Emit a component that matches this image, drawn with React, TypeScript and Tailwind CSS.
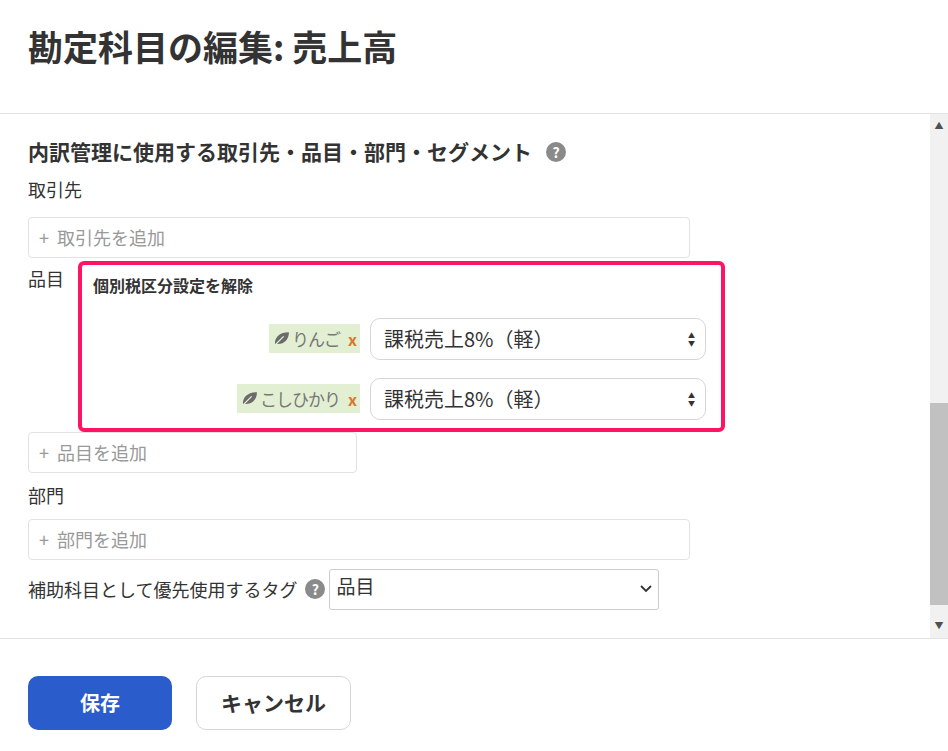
import React from "react";

const font = { fontFamily: '"Noto Sans CJK JP", "Noto Sans", sans-serif' };

function Leaf() {
  return (
    <svg width="17" height="15" viewBox="0 0 16 14" className="inline-block mr-[2px]">
      <path d="M2 13 C1 7 5 1 15 1 C15 8 10 13 3 12 Z" fill="#6b6b6b" />
      <path d="M2 13 L10 5" stroke="#e3efd3" strokeWidth="1.3" fill="none" />
    </svg>
  );
}

function Help() {
  return (
    <span className="inline-flex items-center justify-center w-[20px] h-[20px] rounded-full bg-[#8a8a8a] text-white text-[14px] font-bold leading-none">?</span>
  );
}

function TaxRow({ name }: { name: string }) {
  return (
    <div className="flex items-center justify-end gap-[10px]">
      <span className="flex items-center h-[29px] px-[4px] bg-[#e3efd3] text-[#777] text-[17px] tracking-[-1px]">
        <Leaf />
        {name}
        <span className="ml-[8px] text-[#d8782a] font-bold text-[16px]">x</span>
      </span>
      <div className="w-[336px] h-[42px] border border-[#d6d6d6] rounded-[10px] flex items-center justify-between pl-[13px] pr-[10px] text-[20px] text-[#333]">
        <span>課税売上8%（軽）</span>
        <span className="flex flex-col text-[7px] leading-[8px] text-[#333]">
          <span>▲</span>
          <span>▼</span>
        </span>
      </div>
    </div>
  );
}

function AddInput({ label, w }: { label: string; w: string }) {
  return (
    <div className={`${w} h-[41px] border border-[#e2e2e2] rounded-[4px] flex items-center px-[10px] text-[18px] text-[#999]`}>
      +&nbsp;&nbsp;{label}
    </div>
  );
}

export default function App() {
  return (
    <div className="w-[948px] h-[751px] bg-white flex flex-col overflow-hidden text-[#333]" style={font}>
      <div className="h-[114px] shrink-0 border-b border-[#e2e2e2] flex items-center px-[28px]">
        <h1 className="text-[35px] font-bold text-[#333] -mt-[20px]">勘定科目の編集: 売上高</h1>
      </div>
      <div className="h-[525px] shrink-0 flex border-b border-[#e2e2e2]">
        <div className="flex-1 pl-[28px] pt-[22px]">
          <div className="flex items-center gap-[14px] text-[21px] font-bold">
            内訳管理に使用する取引先・品目・部門・セグメント <Help />
          </div>
          <div className="text-[18px] mt-[8px]">取引先</div>
          <div className="mt-[14px]"><AddInput label="取引先を追加" w="w-[662px]" /></div>
          <div className="flex mt-[3px]">
            <div className="text-[18px] w-[50px] pt-[4px]">品目</div>
            <div className="w-[647px] border-[4px] border-[#ff1464] rounded-[6px] pl-[11px] pr-[15px] pt-[8px] pb-[8px]">
              <div className="text-[16px] font-bold">個別税区分設定を解除</div>
              <div className="mt-[21px] flex flex-col gap-[18px]">
                <TaxRow name="りんご" />
                <TaxRow name="こしひかり" />
              </div>
            </div>
          </div>
          <AddInput label="品目を追加" w="w-[329px]" />
          <div className="text-[18px] mt-[9px]">部門</div>
          <div className="mt-[10px]"><AddInput label="部門を追加" w="w-[662px]" /></div>
          <div className="flex items-center mt-[9px]">
            <span className="text-[18px] mr-[8px]">補助科目として優先使用するタグ</span>
            <Help />
            <div className="ml-[4px] w-[330px] h-[41px] border border-[#ccc] rounded-[3px] flex items-center justify-between px-[6px] text-[19px]">
              <span className="-mt-[6px]">品目</span>
              <svg width="12" height="8" viewBox="0 0 12 8"><path d="M1 1 L6 6 L11 1" stroke="#333" strokeWidth="1.8" fill="none" /></svg>
            </div>
          </div>
        </div>
        <div className="w-[18px] bg-[#f1f1f1] flex flex-col items-center">
          <div className="h-[24px] flex items-center text-[9px] text-[#505050]">▲</div>
          <div className="flex-1 w-full flex flex-col">
            <div className="h-[265px]" />
            <div className="h-[202px] bg-[#c1c1c1] w-full" />
            <div className="flex-1" />
          </div>
          <div className="h-[24px] flex items-center text-[9px] text-[#505050]">▼</div>
        </div>
      </div>
      <div className="flex gap-[24px] px-[28px] pt-[37px]">
        <button className="w-[144px] h-[54px] rounded-[10px] bg-[#2a5ccb] text-white text-[20px] font-bold">保存</button>
        <button className="w-[155px] h-[54px] rounded-[10px] border border-[#d6d6d6] bg-white text-[#333] text-[21px] font-bold">キャンセル</button>
      </div>
    </div>
  );
}
